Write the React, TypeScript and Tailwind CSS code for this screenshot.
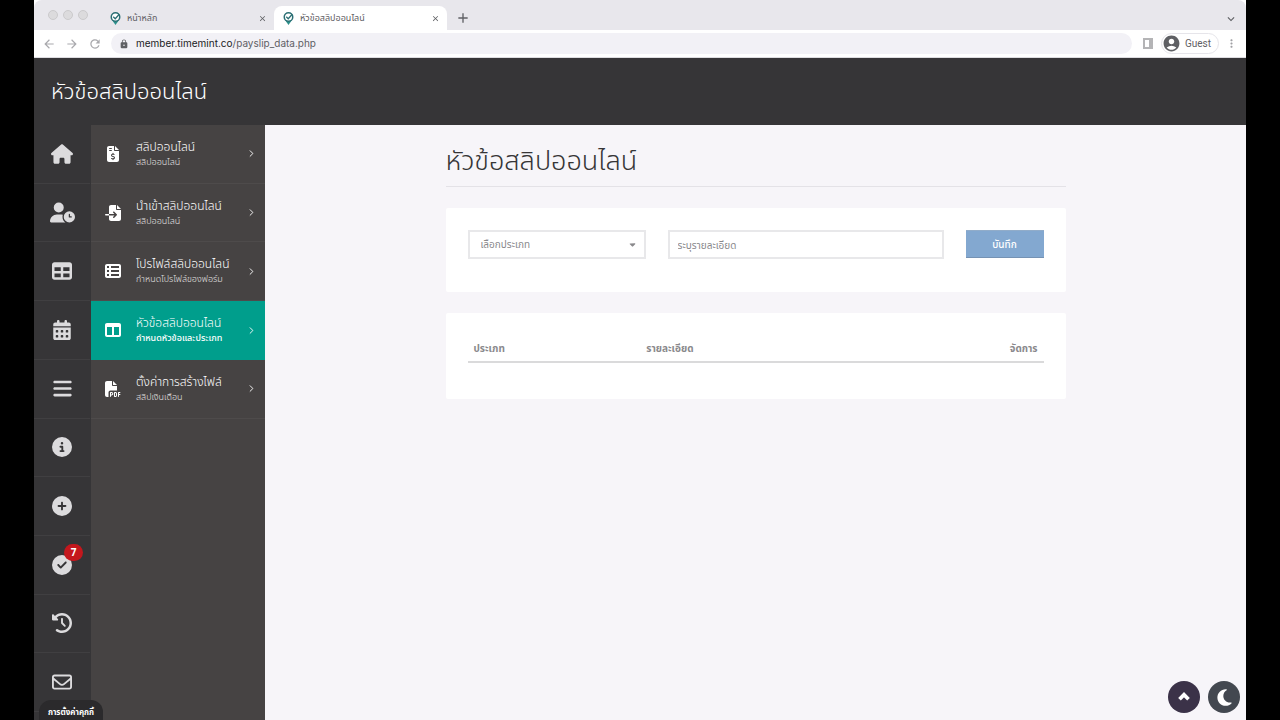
import type { ReactNode } from "react";
import type { IconType } from "react-icons";
import {
  FaBars,
  FaCalendarDays,
  FaCaretDown,
  FaCircleCheck,
  FaCircleInfo,
  FaCirclePlus,
  FaClockRotateLeft,
  FaFileImport,
  FaFileInvoiceDollar,
  FaFilePdf,
  FaHouse,
  FaMoon,
  FaRegEnvelope,
  FaTable,
  FaTableColumns,
  FaTableList,
  FaUserClock,
} from "react-icons/fa6";
import {
  MdAccountCircle,
  MdAdd,
  MdArrowBack,
  MdArrowForward,
  MdClose,
  MdKeyboardArrowDown,
  MdLock,
  MdMoreVert,
  MdRefresh,
} from "react-icons/md";
import { ChevronRight, ChevronUp } from "lucide-react";

const railItems: { icon: IconType; label: string; size: number; badge?: number }[] = [
  { icon: FaHouse, label: "Home", size: 22 },
  { icon: FaUserClock, label: "Attendance", size: 25 },
  { icon: FaTable, label: "Table", size: 20 },
  { icon: FaCalendarDays, label: "Calendar", size: 20 },
  { icon: FaBars, label: "Menu", size: 21 },
  { icon: FaCircleInfo, label: "Info", size: 20 },
  { icon: FaCirclePlus, label: "Add", size: 20 },
  { icon: FaCircleCheck, label: "Approvals", size: 20, badge: 7 },
  { icon: FaClockRotateLeft, label: "History", size: 20 },
  { icon: FaRegEnvelope, label: "Mail", size: 20 },
];

const menuItems = [
  { icon: FaFileInvoiceDollar, title: "สลิปออนไลน์", sub: "สลิปออนไลน์" },
  { icon: FaFileImport, title: "นำเข้าสลิปออนไลน์", sub: "สลิปออนไลน์" },
  { icon: FaTableList, title: "โปรไฟล์สลิปออนไลน์", sub: "กำหนดโปรไฟล์ของฟอร์ม" },
  { icon: FaTableColumns, title: "หัวข้อสลิปออนไลน์", sub: "กำหนดหัวข้อและประเภท", active: true },
  { icon: FaFilePdf, title: "ตั้งค่าการสร้างไฟล์", sub: "สลิปเงินเดือน" },
];

export default function App() {
  return (
    <div className="min-h-screen bg-black px-[34px] font-['Inter','Noto_Sans_Thai','Noto_Sans',sans-serif]">
      <div className="relative flex min-h-screen flex-col overflow-hidden bg-[#f7f5f9]">
        <Browser />
        <header className="flex h-[67px] shrink-0 items-center bg-[#363537] px-[17px] text-[22px] font-light text-white">
          หัวข้อสลิปออนไลน์
        </header>
        <div className="flex flex-1">
          <Rail />
          <SubMenu />
          <Content />
        </div>

        <button className="absolute bottom-0 left-[5px] h-5 w-16 rounded-t-xl bg-[#2b2a2c] pt-1 text-[8px] font-bold whitespace-nowrap text-white">
          การตั้งค่าคุกกี้
        </button>
        <div className="absolute right-[6px] bottom-[7px] flex gap-2 text-white">
          <RoundButton label="Back to top" className="bg-[#3b3248]">
            <ChevronUp size={18} strokeWidth={5} strokeLinecap="butt" strokeLinejoin="miter" />
          </RoundButton>
          <RoundButton label="Dark mode" className="bg-[#434850]">
            <FaMoon size={19} />
          </RoundButton>
        </div>
      </div>
    </div>
  );
}

const Browser = () => {
  return (
    <div className="shrink-0 bg-white text-[#5f6064]">
      <div className="flex h-[30px] items-end rounded-t-lg bg-[#e8e7ec]">
        <div className="flex w-[67px] gap-[5px] self-center pl-[14px]">
          <Dot />
          <Dot />
          <Dot />
        </div>
        <Tab title="หน้าหลัก" />
        <Tab title="หัวข้อสลิปออนไลน์" active />
        <button aria-label="New tab" className="mb-1 ml-2">
          <MdAdd size={16} />
        </button>
        <button aria-label="Search tabs" className="mr-2 mb-1 ml-auto">
          <MdKeyboardArrowDown size={14} />
        </button>
      </div>
      <div className="flex h-7 items-center border-b border-[#dddce0]">
        <div className="flex w-[77px] items-center gap-[9px] pl-2 text-[#a9a9ad]">
          <button aria-label="Back">
            <MdArrowBack size={14} />
          </button>
          <button aria-label="Forward">
            <MdArrowForward size={14} />
          </button>
          <button aria-label="Reload">
            <MdRefresh size={14} />
          </button>
        </div>
        <div className="flex h-[21px] flex-1 items-center gap-[7px] rounded-full bg-[#f2f1f6] px-2">
          <MdLock size={10} className="shrink-0" />
          <span className="font-['Inter'] text-[10px]">
            <span className="text-[#202124]">member.timemint.co</span>/payslip_data.php
          </span>
        </div>
        <div className="flex items-center pr-2 pl-[11px] text-[#a0a0a4]">
          <span className="h-[11px] w-[10px] border-2 border-r-4 border-[#b4b4b6]" />
          <button className="ml-2 flex h-[21px] items-center gap-1 rounded-full border border-[#e6e5ea] pr-[7px] font-['Roboto'] text-[10px] text-[#5f6064]">
            <MdAccountCircle size={19} />
            Guest
          </button>
          <button aria-label="More" className="ml-[6px]">
            <MdMoreVert size={13} />
          </button>
        </div>
      </div>
    </div>
  );
};

const Dot = () => (
  <span className="size-[10px] shrink-0 rounded-full border border-[#cbcacc] bg-[#dcdbdd]" />
);

const Tab = ({ title, active }: { title: string; active?: boolean }) => {
  return (
    <div
      className={
        active
          ? "flex h-6 w-[173px] items-center gap-[6px] rounded-t-lg bg-white pr-[7px] pl-[9px]"
          : "flex h-6 w-[173px] items-center gap-[6px] pr-[7px] pl-[9px]"
      }
    >
      <Pin />
      <span className="flex-1 text-[9px] whitespace-nowrap">{title}</span>
      <button aria-label="Close tab">
        <MdClose size={9} />
      </button>
    </div>
  );
};

const Pin = () => (
  <svg width="11" height="13" viewBox="0 0 22 26" fill="none">
    <path d="M11 26 4 16h14Z" fill="#2a8f8a" />
    <circle cx="11" cy="10" r="8.500" fill="#fff" stroke="#2b6f74" strokeWidth="3" />
    <path d="m6.500 9.500 4 4 8-9" stroke="#2b6f74" strokeWidth="2.500" />
  </svg>
);

const Rail = () => {
  return (
    <nav className="grid w-[57px] shrink-0 grid-rows-10 bg-[#363537] pr-px pb-2 text-[#dcdbdd]">
      {railItems.map(({ icon: Icon, label, size, badge }) => (
        <a
          key={label}
          href="#"
          aria-label={label}
          className="flex items-center justify-center border-b border-[#403f41]"
        >
          <span className="relative">
            <Icon size={size} />
            {badge ? (
              <span className="absolute -top-[11px] left-3 flex h-[17px] w-[19px] items-center justify-center rounded-full bg-[#c4171d] font-['Open_Sans'] text-[10px] font-bold text-white">
                {badge}
              </span>
            ) : null}
          </span>
        </a>
      ))}
    </nav>
  );
};

const SubMenu = () => {
  return (
    <nav className="grid w-[174px] shrink-0 grid-rows-10 bg-[#464343] pb-2 text-white">
      {menuItems.map(({ icon: Icon, title, sub, active }) => (
        <a
          key={title}
          href="#"
          className={
            active
              ? "flex items-center bg-[#009e8c] pr-2 pl-[14px]"
              : "flex items-center border-b border-[#4e4b4b] pr-2 pl-[14px]"
          }
        >
          <span className="flex w-[31px] shrink-0">
            <Icon size={16} />
          </span>
          <span className="flex-1 whitespace-nowrap">
            <span className="block text-xs leading-4 font-light">{title}</span>
            <span
              className={
                active
                  ? "block text-[9px] leading-[14px] font-medium"
                  : "block text-[9px] leading-[14px] font-light text-[#e2e0e0]"
              }
            >
              {sub}
            </span>
          </span>
          <ChevronRight size={11} strokeWidth={2} className="shrink-0" />
        </a>
      ))}
    </nav>
  );
};

const Content = () => {
  return (
    <main className="min-w-0 flex-1">
      <div className="mx-auto max-w-[620px] pt-[18px] text-[10px] text-[#8a898c]">
        <h1 className="mb-[21px] h-[44px] border-b border-[#e4e2e7] text-[27px] leading-9 font-light text-[#363537]">
          หัวข้อสลิปออนไลน์
        </h1>

        <form className="mb-[21px] flex h-[84px] items-start gap-[22px] rounded-xs bg-white p-[22px]">
          <div className="relative w-[178px] shrink-0">
            <select
              aria-label="ประเภท"
              className="block h-[29px] w-full appearance-none border-2 border-[#e8e8ea] bg-white px-[11px]"
            >
              <option>เลือกประเภท</option>
            </select>
            <FaCaretDown size={9} className="pointer-events-none absolute top-[10px] right-[9px]" />
          </div>
          <input
            aria-label="รายละเอียด"
            placeholder="ระบุรายละเอียด"
            className="h-[29px] min-w-0 flex-1 border-2 border-[#e8e8ea] px-2 placeholder:text-[#8a898c]"
          />
          <button
            type="button"
            className="h-7 w-[78px] shrink-0 border-y border-t-[#91acc9] border-b-[#7592b3] bg-[#83a8d0] font-medium text-white"
          >
            บันทึก
          </button>
        </form>

        <section className="h-[86px] rounded-xs bg-white p-[22px]">
          <table className="w-full table-fixed">
            <thead>
              <tr className="h-[27px] border-b-2 border-[#dadadb] text-left">
                <th className="w-[30%] px-[6px] font-bold">ประเภท</th>
                <th className="px-[6px] font-bold">รายละเอียด</th>
                <th className="w-[20%] px-[6px] text-right font-bold">จัดการ</th>
              </tr>
            </thead>
          </table>
        </section>
      </div>
    </main>
  );
};

const RoundButton = ({
  label,
  className,
  children,
}: {
  label: string;
  className: string;
  children: ReactNode;
}) => (
  <button
    aria-label={label}
    className={`flex size-8 items-center justify-center rounded-full ${className}`}
  >
    {children}
  </button>
);
